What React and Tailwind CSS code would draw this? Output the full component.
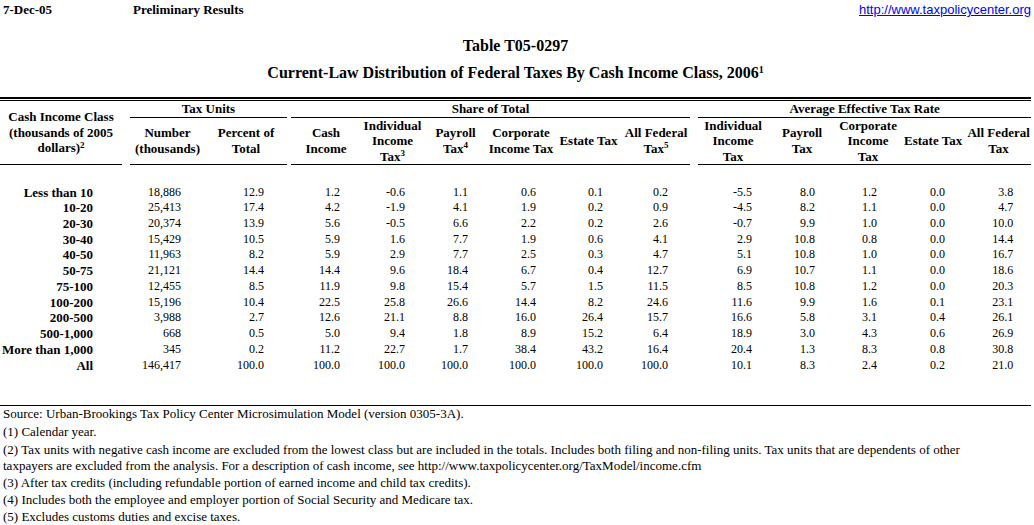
const rows = [
  ["Less than 10", "18,886", "12.9", "1.2", "-0.6", "1.1", "0.6", "0.1", "0.2", "-5.5", "8.0", "1.2", "0.0", "3.8"],
  ["10-20", "25,413", "17.4", "4.2", "-1.9", "4.1", "1.9", "0.2", "0.9", "-4.5", "8.2", "1.1", "0.0", "4.7"],
  ["20-30", "20,374", "13.9", "5.6", "-0.5", "6.6", "2.2", "0.2", "2.6", "-0.7", "9.9", "1.0", "0.0", "10.0"],
  ["30-40", "15,429", "10.5", "5.9", "1.6", "7.7", "1.9", "0.6", "4.1", "2.9", "10.8", "0.8", "0.0", "14.4"],
  ["40-50", "11,963", "8.2", "5.9", "2.9", "7.7", "2.5", "0.3", "4.7", "5.1", "10.8", "1.0", "0.0", "16.7"],
  ["50-75", "21,121", "14.4", "14.4", "9.6", "18.4", "6.7", "0.4", "12.7", "6.9", "10.7", "1.1", "0.0", "18.6"],
  ["75-100", "12,455", "8.5", "11.9", "9.8", "15.4", "5.7", "1.5", "11.5", "8.5", "10.8", "1.2", "0.0", "20.3"],
  ["100-200", "15,196", "10.4", "22.5", "25.8", "26.6", "14.4", "8.2", "24.6", "11.6", "9.9", "1.6", "0.1", "23.1"],
  ["200-500", "3,988", "2.7", "12.6", "21.1", "8.8", "16.0", "26.4", "15.7", "16.6", "5.8", "3.1", "0.4", "26.1"],
  ["500-1,000", "668", "0.5", "5.0", "9.4", "1.8", "8.9", "15.2", "6.4", "18.9", "3.0", "4.3", "0.6", "26.9"],
  ["More than 1,000", "345", "0.2", "11.2", "22.7", "1.7", "38.4", "43.2", "16.4", "20.4", "1.3", "8.3", "0.8", "30.8"],
  ["All", "146,417", "100.0", "100.0", "100.0", "100.0", "100.0", "100.0", "100.0", "10.1", "8.3", "2.4", "0.2", "21.0"],
];

// right padding of each value cell, so the figures line up under their headers
const pads = [
  "pr-[24px]", "pr-[23px]",
  "pr-[21px]", "pr-[19px]", "pr-[19px]", "pr-[19px]", "pr-[19px]", "pr-[22px]",
  "pr-[16px]", "pr-[21px]", "pr-[23px]", "pr-[21px]", "pr-[18px]",
];

function Sup({ children }) {
  return <sup className="text-[9px]">{children}</sup>;
}

function Head({ children, className = "", ...rest }) {
  return (
    <th {...rest} className={"p-0 font-bold text-[13px] leading-[15.5px] text-center align-middle border-b border-black whitespace-nowrap " + className}>
      {children}
    </th>
  );
}

export default function App() {
  return (
    <div className="w-[1034px] h-[525px] overflow-hidden bg-white text-black font-['Liberation_Serif',serif]">
      <div className="flex items-center h-[20px] text-[13px] font-bold">
        <span className="pl-[3px] w-[133px]">7-Dec-05</span>
        <span>Preliminary Results</span>
        <a href="#" className="ml-auto pr-[3px] font-['Liberation_Sans',sans-serif] font-normal text-[13px] text-[#0000ff] underline">
          http://www.taxpolicycenter.org
        </a>
      </div>

      <div className="text-center font-bold text-[16px] leading-[18px] mt-[17px] w-[1031px]">Table T05-0297</div>
      <div className="text-center font-bold text-[16px] leading-[18px] mt-[9px] w-[1031px]">
        Current-Law Distribution of Federal Taxes By Cash Income Class, 2006<sup className="text-[10px]">1</sup>
      </div>

      <div className="mt-[15px] w-[1031px]">
        <div className="h-[2px] bg-black" />
        <div className="h-px mt-px bg-black" />
      </div>

      <table className="table-fixed border-collapse w-[1031px]">
        <colgroup>
          <col className="w-[122px]" />
          <col className="w-[8px]" />
          <col className="w-[75px]" />
          <col className="w-[82px]" />
          <col className="w-[4px]" />
          <col className="w-[70px]" />
          <col className="w-[63px]" />
          <col className="w-[63px]" />
          <col className="w-[68px]" />
          <col className="w-[67px]" />
          <col className="w-[68px]" />
          <col className="w-[8px]" />
          <col className="w-[70px]" />
          <col className="w-[68px]" />
          <col className="w-[64px]" />
          <col className="w-[66px]" />
          <col className="w-[65px]" />
        </colgroup>
        <thead>
          <tr className="h-[16px]">
            <Head rowSpan={2}>
              Cash Income Class<br />(thousands of 2005<br />dollars)<Sup>2</Sup>
            </Head>
            <th className="p-0" />
            <Head colSpan={2}>Tax Units</Head>
            <th className="p-0" />
            <Head colSpan={6}>Share of Total</Head>
            <th className="p-0" />
            <Head colSpan={5}>Average Effective Tax Rate</Head>
          </tr>
          <tr className="h-[47px]">
            <th className="p-0" />
            <Head>Number<br />(thousands)</Head>
            <Head>Percent of<br />Total</Head>
            <th className="p-0" />
            <Head>Cash<br />Income</Head>
            <Head>Individual<br />Income<br />Tax<Sup>3</Sup></Head>
            <Head>Payroll<br />Tax<Sup>4</Sup></Head>
            <Head>Corporate<br />Income Tax</Head>
            <Head>Estate Tax</Head>
            <Head>All Federal<br />Tax<Sup>5</Sup></Head>
            <th className="p-0" />
            <Head>Individual<br />Income<br />Tax</Head>
            <Head>Payroll<br />Tax</Head>
            <Head>Corporate<br />Income<br />Tax</Head>
            <Head>Estate Tax</Head>
            <Head>All Federal<br />Tax</Head>
          </tr>
        </thead>
        <tbody>
          <tr className="h-[20px]"><td colSpan={17} className="p-0" /></tr>
          {rows.map((row, i) => (
            <tr key={i} className="h-[15.73px]">
              <td className="p-0 pr-[29px] text-right font-bold text-[13px] leading-[15.73px] whitespace-nowrap">{row[0]}</td>
              <td className="p-0" />
              {row.slice(1, 3).map((v, j) => (
                <td key={j} className={"p-0 text-right text-[12px] leading-[15.73px] " + pads[j]}>{v}</td>
              ))}
              <td className="p-0" />
              {row.slice(3, 9).map((v, j) => (
                <td key={j} className={"p-0 text-right text-[12px] leading-[15.73px] " + pads[j + 2]}>{v}</td>
              ))}
              <td className="p-0" />
              {row.slice(9).map((v, j) => (
                <td key={j} className={"p-0 text-right text-[12px] leading-[15.73px] " + pads[j + 8]}>{v}</td>
              ))}
            </tr>
          ))}
          <tr className="h-[32px]"><td colSpan={17} className="p-0 border-b border-black" /></tr>
        </tbody>
      </table>

      <div className="pl-[3px] text-[13px] whitespace-nowrap">
        <div className="leading-[16px]">Source: Urban-Brookings Tax Policy Center Microsimulation Model (version 0305-3A).</div>
        <div className="leading-[18px] mt-px">(1) Calendar year.</div>
        <div className="leading-[16px] mt-[1px]">
          (2) Tax units with negative cash income are excluded from the lowest class but are included in the totals. Includes both filing and non-filing units. Tax units that are dependents of other
          <br />
          taxpayers are excluded from the analysis. For a description of cash income, see http://www.taxpolicycenter.org/TaxModel/income.cfm
        </div>
        <div className="leading-[17px]">(3) After tax credits (including refundable portion of earned income and child tax credits).</div>
        <div className="leading-[17px]">(4) Includes both the employee and employer portion of Social Security and Medicare tax.</div>
        <div className="leading-[18px]">(5) Excludes customs duties and excise taxes.</div>
      </div>
    </div>
  );
}
